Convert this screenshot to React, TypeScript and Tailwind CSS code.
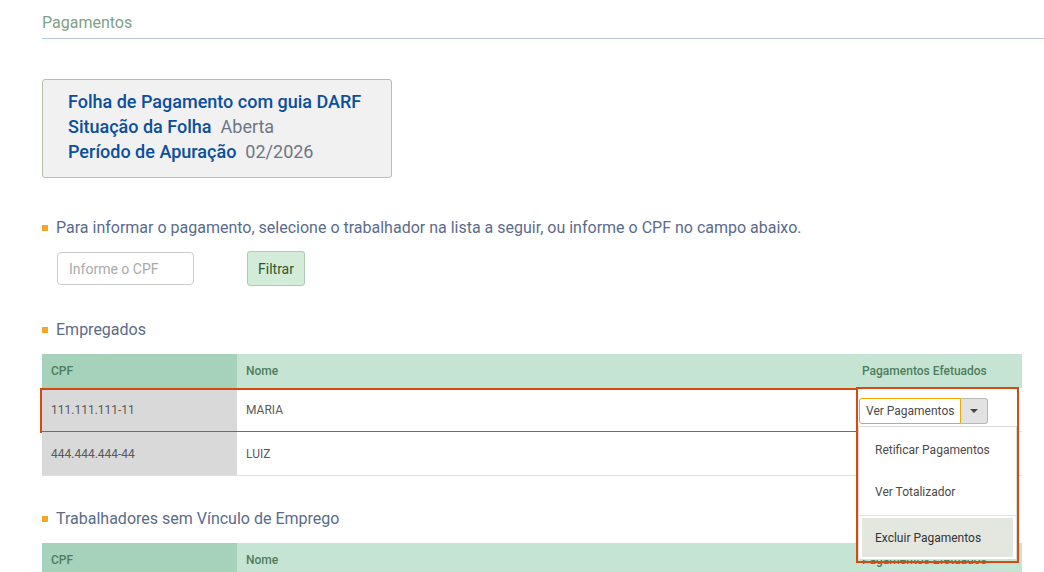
import React from 'react';

type Worker = { cpf: string; nome: string };

const empregados: Worker[] = [
  { cpf: '111.111.111-11', nome: 'MARIA' },
  { cpf: '444.444.444-44', nome: 'LUIZ' },
];

const Bullet: React.FC<{ children: React.ReactNode }> = ({ children }) => (
  <div className="flex items-center gap-2 text-base text-[#5b6b8c]">
    <span className="w-[6px] h-[6px] bg-[#f5a623] inline-block" />
    <span>{children}</span>
  </div>
);

const TableHead: React.FC = () => (
  <div className="flex h-[34px] text-xs font-medium text-[#4e7d5c]">
    <div className="w-[195px] bg-[#a6d2bb] flex items-center pl-[9px]">CPF</div>
    <div className="flex-1 bg-[#c6e4d3] flex items-center pl-[9px]">Nome</div>
    <div className="w-[167px] bg-[#c6e4d3] flex items-center pl-[7px]">Pagamentos Efetuados</div>
  </div>
);

const ActionsDropdown: React.FC = () => (
  <div className="absolute left-[1px] top-[-1px] w-[163px] h-[176px] border-2 border-[#d9480f] z-10">
    <div className="flex mt-[9px] ml-[1px] h-[26px] text-xs">
      <button className="px-[6px] bg-white border border-[#f5a500] rounded-l-[3px] text-[#4a4a4a]">
        Ver Pagamentos
      </button>
      <button className="w-[27px] bg-[#e2e2e2] border border-[#b8b8b8] border-l-0 rounded-r-[3px] flex items-center justify-center">
        <svg width="8" height="5" viewBox="0 0 8 5">
          <path d="M0 0 L8 0 L4 4 Z" fill="#444" />
        </svg>
      </button>
    </div>
    <div className="mt-[2px] w-[159px] bg-white border border-[#dcdcdc] text-xs text-[#4a4a4a] py-[2px]">
      <div className="h-[41px] flex items-center pl-[16px]">Retificar Pagamentos</div>
      <div className="h-[43px] flex items-center pl-[16px]">Ver Totalizador</div>
      <div className="h-px bg-[#e2e2e2] my-[2px]" />
      <div className="mx-[3px] h-[39px] bg-[#e4e7df] flex items-center pl-[13px] text-[#333]">
        Excluir Pagamentos
      </div>
    </div>
  </div>
);

const App: React.FC = () => {
  return (
    <div className="w-[1044px] h-[572px] overflow-hidden bg-white pl-[42px] font-['Roboto',sans-serif]">
      <div className="pt-[11px] pb-[3px] border-b border-[#b9c8e2] text-base text-[#7fa089]">
        Pagamentos
      </div>

      <div className="mt-[40px] w-[350px] h-[99px] bg-[#f1f1f1] border border-[#aec4a5] rounded-[3px] pl-[25px] pt-[9px] text-lg leading-[25px]">
        <div className="font-medium text-[#0b4f9c]">Folha de Pagamento com guia DARF</div>
        <div>
          <span className="font-medium text-[#0b4f9c]">Situação da Folha</span>
          <span className="ml-[9px] text-[#6e7686]">Aberta</span>
        </div>
        <div>
          <span className="font-medium text-[#0b4f9c]">Período de Apuração</span>
          <span className="ml-[9px] text-[#6e7686]">02/2026</span>
        </div>
      </div>

      <div className="mt-[38px]">
        <Bullet>Para informar o pagamento, selecione o trabalhador na lista a seguir, ou informe o CPF no campo abaixo.</Bullet>
      </div>

      <div className="flex items-center mt-[11px] ml-[15px] gap-[53px]">
        <input
          placeholder="Informe o CPF"
          className="w-[137px] h-[33px] border border-[#cccccc] rounded-[4px] px-[11px] text-sm text-[#555] placeholder:text-[#aaaaaa] outline-none"
        />
        <button className="w-[58px] h-[35px] bg-[#d3ebd9] border border-[#a9cfb3] rounded-[3px] text-sm text-[#2e5a2a]">
          Filtrar
        </button>
      </div>

      <div className="mt-[32px]">
        <Bullet>Empregados</Bullet>
      </div>

      <div className="mt-[12px] w-[980px]">
        <TableHead />
        {empregados.map((w, i) => (
          <div key={w.cpf} className="relative flex h-[44px] text-xs text-[#5a5a5a] border-b border-[#e0e0e0]">
            <div className="w-[195px] bg-[#d9d9d9] flex items-center pl-[9px]">{w.cpf}</div>
            <div className="flex-1 bg-white flex items-center pl-[9px]">{w.nome}</div>
            <div className="relative w-[167px] bg-white">{i === 0 && <ActionsDropdown />}</div>
            {i === 0 && (
              <div className="absolute left-[-2px] top-0 w-[818px] h-[45px] border-2 border-[#d9480f] pointer-events-none" />
            )}
          </div>
        ))}
      </div>

      <div className="mt-[31px]">
        <Bullet>Trabalhadores sem Vínculo de Emprego</Bullet>
      </div>

      <div className="mt-[12px] w-[980px]">
        <TableHead />
      </div>
    </div>
  );
};

export default App;
